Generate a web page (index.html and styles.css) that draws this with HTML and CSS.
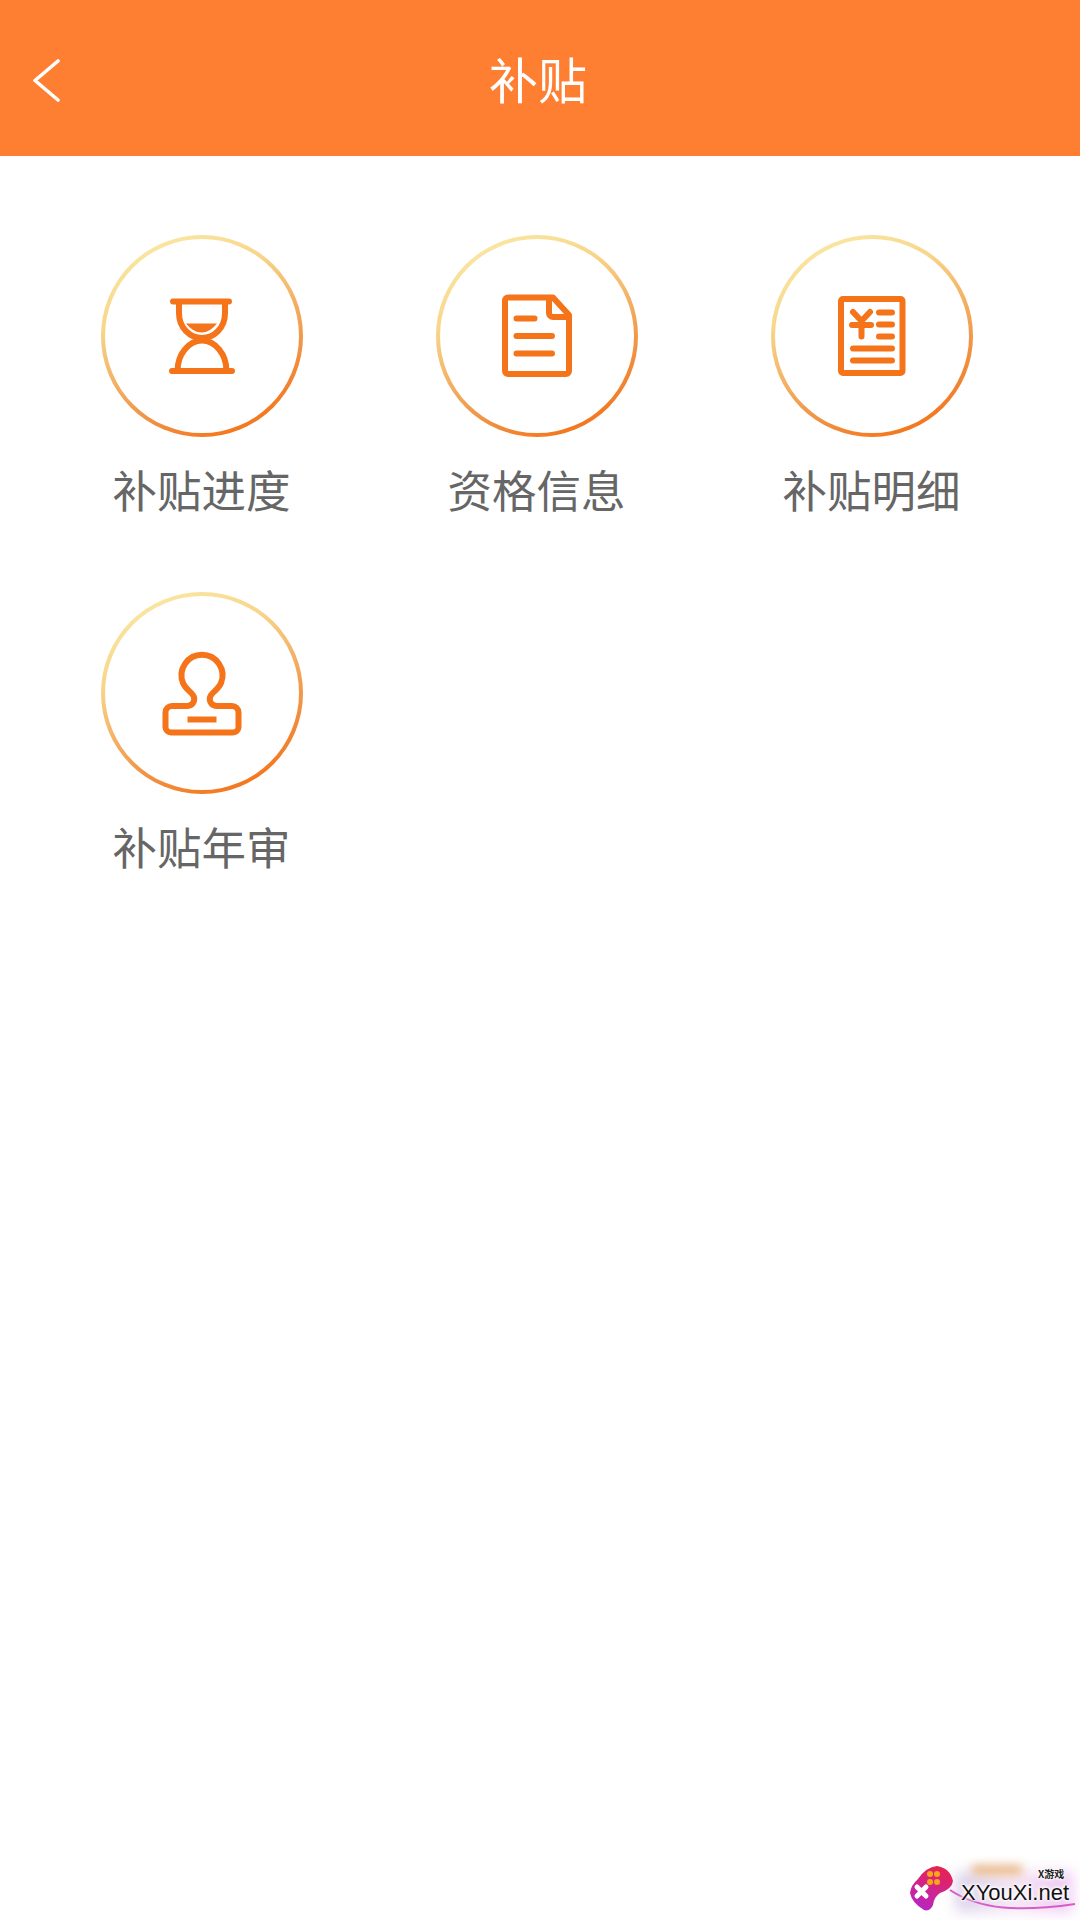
FILE: index.html
```html
<!DOCTYPE html>
<html lang="zh-CN">
<head>
<meta charset="utf-8">
<title>补贴</title>
<link rel="stylesheet" href="styles.css">
</head>
<body>
<div class="page">
  <header class="topbar">
    <svg class="back" viewBox="0 0 36 48" width="36" height="48"><path d="M29 7 L6 26.5 L29 46"/></svg>
    <h1 class="title">补贴</h1>
    <span></span>
  </header>
  <main class="grid">
    <a class="item">
      <div class="ring">
        <svg class="icon" viewBox="0 0 100 100" width="100" height="100">
          <path d="M21 15.5 H77 M20 85 H80"/>
          <path class="thick" d="M27 16 V27 C27 42 38 52 50 52 C62 52 73 42 73 27 V16"/>
          <path class="thick" d="M25.5 85 C25.5 68 37 54.5 50 54.5 C63 54.5 74.5 68 74.5 85"/>
          <path class="fill" d="M34 37.5 H65 Q58 46.5 49.5 46.5 Q41 46.5 34 37.5Z"/>
        </svg>
      </div>
      <span class="label">补贴进度</span>
    </a>
    <a class="item">
      <div class="ring">
        <svg class="icon" viewBox="0 0 100 100" width="100" height="100">
          <path d="M66 11.5 H21 a3 3 0 0 0 -3 3 V85 a3 3 0 0 0 3 3 H79 a3 3 0 0 0 3 -3 V29 Z"/>
          <path d="M62 12 V27 a4 4 0 0 0 4 4 H82"/>
          <path d="M29.5 32.5 H47.5 M29.5 50 H65 M29.5 67.5 H65"/>
        </svg>
      </div>
      <span class="label">资格信息</span>
    </a>
    <a class="item">
      <div class="ring">
        <svg class="icon" viewBox="0 0 100 100" width="100" height="100">
          <rect x="19" y="13" width="61.5" height="74" rx="2"/>
          <path d="M31 26 L39.5 35 L48 26 M30 39 H49 M39.5 35 V50.5"/>
          <path d="M57 26.5 H70 M57 38.5 H70 M57 50.5 H70 M31 62.5 H70 M31 74.5 H70"/>
        </svg>
      </div>
      <span class="label">补贴明细</span>
    </a>
    <a class="item">
      <div class="ring">
        <svg class="icon" viewBox="0 0 100 100" width="100" height="100">
          <path d="M20 63 H35 C40 63 43 59 42 54 C41 50 34 47 31 40 A20.5 20.5 0 1 1 69 40 C66 47 59 50 58 54 C57 59 60 63 65 63 H80 a6.5 6.5 0 0 1 6.5 6.5 V84 a5.5 5.5 0 0 1 -5.5 5.5 H19 a5.5 5.5 0 0 1 -5.5 -5.5 V69.5 a6.5 6.5 0 0 1 6.5 -6.5 Z"/>
          <path class="butt" d="M35.5 76.5 H64.5"/>
        </svg>
      </div>
      <span class="label">补贴年审</span>
    </a>
  </main>
  <aside class="mark">
    <div class="mark-glow"></div>
    <div class="mark-glow-top"></div>
    <svg class="mark-art" viewBox="0 0 170 60" width="170" height="60">
      <defs>
        <linearGradient id="padfill" x1="0.7" y1="0" x2="0.3" y2="1">
          <stop offset="0" stop-color="#e8234f"/>
          <stop offset="1" stop-color="#b825c4"/>
        </linearGradient>
      </defs>
      <path class="mark-swoosh" d="M40 30 C70 50 110 52 165 44"/>
      <path fill="url(#padfill)" d="M8 19 Q16 7 27 6 Q40 8 43 21 Q42 29 30 33 Q24 37 23 45 Q20 52 14 50 Q2 43 0 33 Q1 25 8 19Z"/>
      <g class="mark-dots"><circle cx="20" cy="14" r="3"/><circle cx="27" cy="14" r="3"/><circle cx="20" cy="22" r="3"/><circle cx="27" cy="22" r="3"/></g>
      <path class="mark-x" d="M7 27 L16 36 M16 27 L7 36"/>
    </svg>
    <span class="mark-small">X游戏</span>
    <span class="mark-name">XYouXi.net</span>
  </aside>
</div>
</body>
</html>
```
FILE: styles.css
```css
* { box-sizing: border-box; }
html, body { margin: 0; padding: 0; background: #fff; }
.page {
  position: relative;
  width: 1080px;
  height: 1920px;
  overflow: hidden;
  background: #fff;
  font-family: "Noto Sans CJK SC", "Noto Sans", sans-serif;
}
.topbar {
  height: 156px;
  background: #ff7f32;
  display: grid;
  grid-template-columns: 1fr auto 1fr;
  align-items: center;
  padding-left: 29px;
}
.back { fill: none; stroke: #fff; stroke-width: 3.6; stroke-linecap: round; stroke-linejoin: round; }
.title {
  margin: 0 0 0 -33px;
  font-size: 49px;
  font-weight: 400;
  line-height: 60px;
  color: #fff;
}
.grid {
  display: grid;
  grid-template-columns: repeat(3, 335px);
  grid-auto-rows: 357px;
  padding: 79px 0 0 34px;
}
.item { display: flex; flex-direction: column; align-items: center; }
.ring {
  width: 202px;
  height: 202px;
  border-radius: 50%;
  border: 4px solid transparent;
  background:
    linear-gradient(#fff, #fff) padding-box,
    linear-gradient(155deg, #fae8a4 8%, #f8d58a 32%, #f0984a 66%, #f4741a 90%) border-box;
  display: flex;
  align-items: center;
  justify-content: center;
}
.icon { flex: none; fill: none; stroke: #f5741a; stroke-width: 6; stroke-linecap: round; stroke-linejoin: round; }
.icon .thick { stroke-width: 6; stroke-linecap: butt; }
.icon .fill { fill: #f5741a; stroke: none; }
.icon .butt { stroke-linecap: butt; }
.label {
  margin-top: 22px;
  font-size: 44.5px;
  font-weight: 400;
  line-height: 60px;
  color: #666;
}
.mark {
  position: absolute;
  right: 0;
  bottom: 0;
  width: 170px;
  height: 60px;
}
.mark-glow {
  position: absolute;
  left: 46px;
  top: 12px;
  width: 116px;
  height: 40px;
  background: linear-gradient(90deg, #c4b6de, #f0d8ee 50%, #e6a6ee);
  filter: blur(7px);
  opacity: 0.65;
}
.mark-glow-top {
  position: absolute;
  left: 62px;
  top: 5px;
  width: 50px;
  height: 10px;
  background: #eab98a;
  filter: blur(5px);
}
.mark-art { position: absolute; left: 0; top: 0; }
.mark-swoosh { fill: none; stroke: #d65cc8; stroke-width: 2; }
.mark-dots { fill: #f9a51a; }
.mark-x { fill: none; stroke: #fff; stroke-width: 5; stroke-linecap: round; }
.mark-small {
  position: absolute;
  left: 125px;
  top: 7px;
  padding: 0 3px;
  font-size: 10px;
  font-weight: 700;
  line-height: 14px;
  color: #222;
  text-shadow: 0 0 3px #fff, 0 0 3px #fff, 0 0 5px #fff;
}
.mark-name {
  position: absolute;
  left: 51px;
  top: 20px;
  font-family: "Liberation Sans", sans-serif;
  font-size: 22px;
  line-height: 26px;
  color: #111;
  text-shadow: 0 0 3px #fff, 0 0 3px #fff, 0 0 4px #fff, 0 0 6px #fff;
  white-space: nowrap;
}
```
